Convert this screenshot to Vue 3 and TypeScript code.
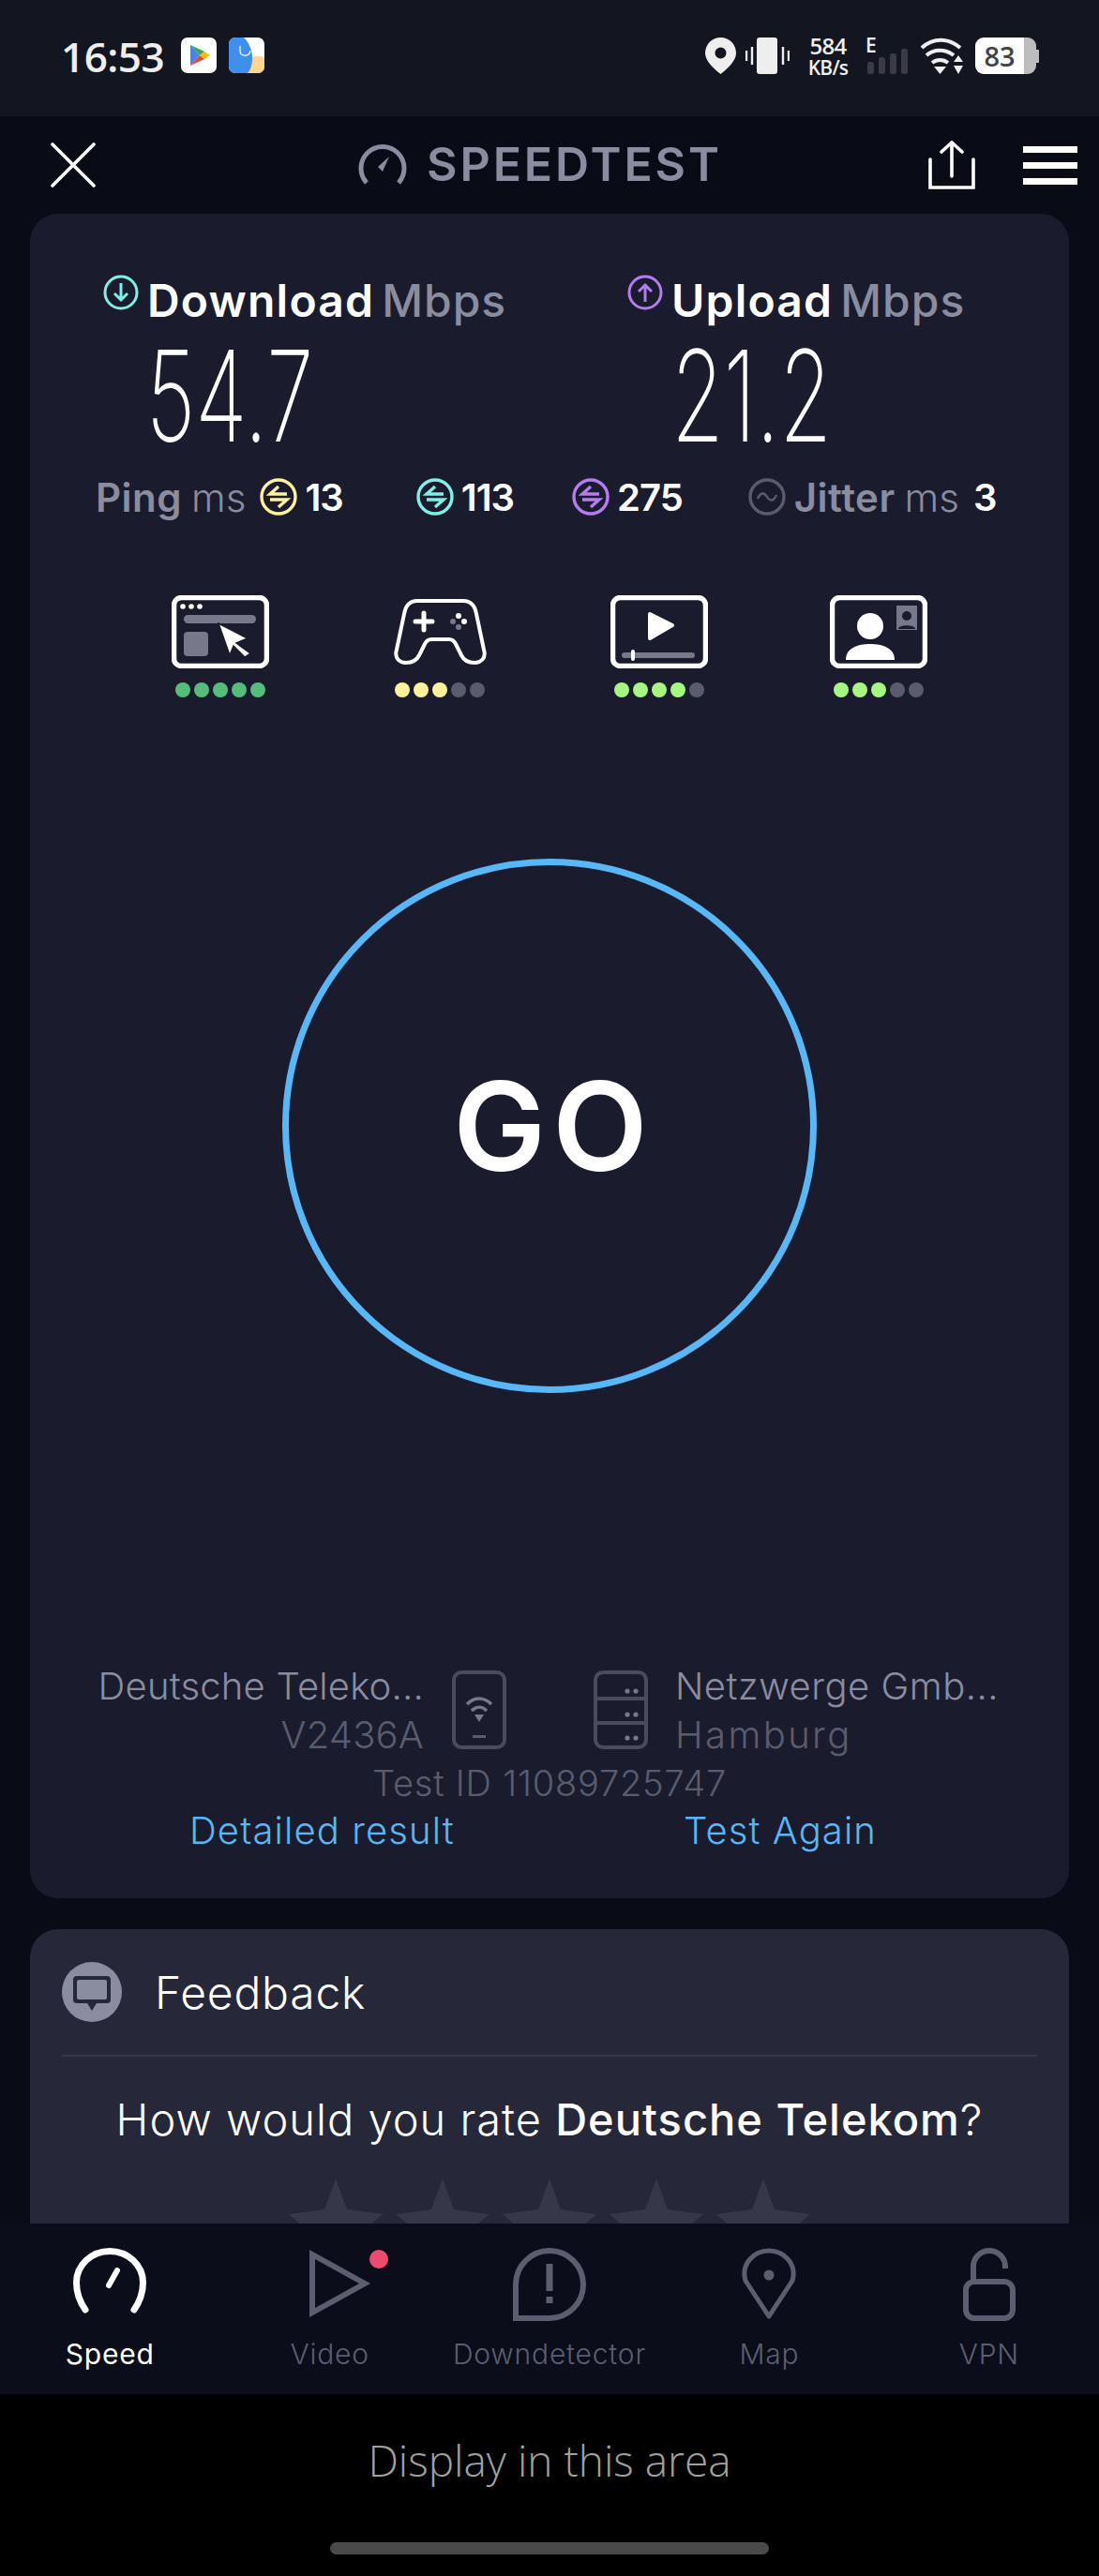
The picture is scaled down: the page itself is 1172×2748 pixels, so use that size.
<script setup lang="ts">
const quality = [
  { id: 'web', dots: ['#54bd7b', '#54bd7b', '#54bd7b', '#54bd7b', '#54bd7b'] },
  { id: 'game', dots: ['#fdf29a', '#fdf29a', '#fdf29a', '#5a5c6e', '#5a5c6e'] },
  { id: 'video', dots: ['#a5f77f', '#a5f77f', '#a5f77f', '#a5f77f', '#5a5c6e'] },
  { id: 'call', dots: ['#a5f77f', '#a5f77f', '#a5f77f', '#5a5c6e', '#5a5c6e'] },
]

const tabs = ['Speed', 'Video', 'Downdetector', 'Map', 'VPN']
</script>

<template>
  <div class="screen">
    <header class="status">
      <div class="status__left">
        <span class="clock">16:53</span>
        <svg class="app-icon" viewBox="0 0 38 38">
          <rect width="38" height="38" rx="7" fill="#fff" />
          <path d="M10 8 L20 19 L10 30 Z" fill="#4285f4" />
          <path d="M10 8 L25 15 L20 19 Z" fill="#34a853" />
          <path d="M10 30 L25 23 L20 19 Z" fill="#ea4335" />
          <path d="M25 15 L31 19 L25 23 L20 19 Z" fill="#fbbc04" />
        </svg>
        <svg class="app-icon" viewBox="0 0 38 38">
          <rect width="38" height="38" rx="7" fill="#fff" />
          <path d="M21 38 H31 A7 7 0 0 0 38 31 V22 C32 18 26 20 24 22 Z" fill="#fbd68c" />
          <path d="M7 0 H16 C22 6 25 14 25 22 C25 29 23 35 20 38 H7 A7 7 0 0 1 0 31 V7 A7 7 0 0 1 7 0 Z" fill="#3f8fee" />
          <path d="M12 9 V14 C12 21 22 21 23 14" fill="none" stroke="#e8f1ff" stroke-width="1.4" />
        </svg>
      </div>
      <div class="status__right">
        <svg class="st-pin" viewBox="0 0 33 39">
          <path fill-rule="evenodd" d="M16.5 0 A16.5 16.5 0 0 1 33 16.5 C33 25 24 33 16.5 39 C9 33 0 25 0 16.5 A16.5 16.5 0 0 1 16.5 0 Z M16.5 10.5 A6 6 0 1 0 16.51 22.5 A6 6 0 1 0 16.5 10.5 Z" fill="#eee" />
        </svg>
        <svg class="st-vibrate" viewBox="0 0 47 39">
          <rect x="12" y="0" width="22" height="39" rx="3" fill="#eee" />
          <path d="M1 14 V25 M7 10 V29 M40 10 V29 M46 14 V25" stroke="#eee" stroke-width="2.4" />
        </svg>
        <div class="net-speed"><span>584</span><span>KB/s</span></div>
        <div class="cell">
          <span class="cell__e">E</span>
          <svg class="cell__bars" viewBox="0 0 44 27">
            <rect x="0" y="14" width="7" height="13" rx="2.5" fill="#3a3b46" />
            <rect x="12" y="9" width="7" height="18" rx="2.5" fill="#3a3b46" />
            <rect x="24" y="5" width="7" height="22" rx="2.5" fill="#3a3b46" />
            <rect x="36" y="0" width="7" height="27" rx="2.5" fill="#3a3b46" />
          </svg>
        </div>
        <svg class="st-wifi" viewBox="0 0 49 39">
          <path d="M2 11 C14 0 30 0 43 11" fill="none" stroke="#eee" stroke-width="4" />
          <path d="M7 19 C15 12 27 12 36 19" fill="none" stroke="#eee" stroke-width="4" />
          <path d="M13 27 C18 23 25 23 30 27" fill="none" stroke="#eee" stroke-width="4" />
          <path d="M15 31 H28 L21.5 39 Z" fill="#eee" />
          <path d="M41 19 L46 26 H36 Z M36 30 H46 L41 39 Z" fill="#eee" />
        </svg>
        <div class="battery"><span class="battery__level">83</span><span class="battery__rest"></span><span class="battery__tip"></span></div>
      </div>
    </header>

    <nav class="appbar">
      <svg class="appbar__close" viewBox="0 0 48 48">
        <path d="M2 2 L46 46 M46 2 L2 46" stroke="#fff" stroke-width="3.6" stroke-linecap="round" />
      </svg>
      <div class="appbar__title">
        <svg class="appbar__gauge" viewBox="0 0 52 46">
          <path d="M9 43 A23 23 0 1 1 43 43" fill="none" stroke="#8a8ca0" stroke-width="5" />
          <path d="M21 26 L33 15 L26 31 Z" fill="#8a8ca0" />
        </svg>
        <span>SPEEDTEST</span>
      </div>
      <div class="appbar__actions">
        <svg class="appbar__share" viewBox="0 0 50 52">
          <path d="M2 20 V50 H48 V20 M25 38 V3 M14 12 L25 2 L36 12" fill="none" stroke="#fff" stroke-width="3.6" stroke-linecap="round" />
        </svg>
        <div class="burger"><span></span><span></span><span></span></div>
      </div>
    </nav>

    <main class="content">
      <section class="result">
        <div class="speeds">
          <div class="speed speed--down">
            <div class="speed__head">
              <svg class="speed__icon" viewBox="0 0 38 38">
                <circle cx="19" cy="19" r="17" fill="none" stroke="#7ff0e8" stroke-width="3" />
                <path d="M19 9 V27 M12 20 L19 27 L26 20" fill="none" stroke="#7ff0e8" stroke-width="3" />
              </svg>
              <span class="speed__label">Download</span>
              <span class="speed__unit">Mbps</span>
            </div>
            <div class="speed__value">54.7</div>
          </div>
          <div class="speed speed--up">
            <div class="speed__head">
              <svg class="speed__icon" viewBox="0 0 38 38">
                <circle cx="19" cy="19" r="17" fill="none" stroke="#b57bf0" stroke-width="3" />
                <path d="M19 29 V11 M12 18 L19 11 L26 18" fill="none" stroke="#b57bf0" stroke-width="3" />
              </svg>
              <span class="speed__label">Upload</span>
              <span class="speed__unit">Mbps</span>
            </div>
            <div class="speed__value">21.2</div>
          </div>
        </div>

        <div class="latency">
          <span class="latency__label">Ping</span>
          <span class="latency__unit">ms</span>
          <svg class="bolt bolt--ping" viewBox="0 0 40 40">
            <circle cx="20" cy="20" r="18" fill="none" stroke="currentColor" stroke-width="3.4" />
            <path d="M20 9 L11 17 H29 M20 31 L29 23 H11" fill="none" stroke="currentColor" stroke-width="3.4" />
          </svg>
          <b class="latency__num num-ping">13</b>
          <svg class="bolt bolt--down" viewBox="0 0 40 40">
            <circle cx="20" cy="20" r="18" fill="none" stroke="currentColor" stroke-width="3.4" />
            <path d="M20 9 L11 17 H29 M20 31 L29 23 H11" fill="none" stroke="currentColor" stroke-width="3.4" />
          </svg>
          <b class="latency__num num-down">113</b>
          <svg class="bolt bolt--up" viewBox="0 0 40 40">
            <circle cx="20" cy="20" r="18" fill="none" stroke="currentColor" stroke-width="3.4" />
            <path d="M20 9 L11 17 H29 M20 31 L29 23 H11" fill="none" stroke="currentColor" stroke-width="3.4" />
          </svg>
          <b class="latency__num num-up">275</b>
          <svg class="bolt bolt--jitter" viewBox="0 0 40 40">
            <circle cx="20" cy="20" r="18" fill="none" stroke="currentColor" stroke-width="3.4" />
            <path d="M10 22 C13 15 17 15 20 20 C23 25 27 25 30 18" fill="none" stroke="currentColor" stroke-width="2.4" />
          </svg>
          <span class="latency__label">Jitter</span>
          <span class="latency__unit">ms</span>
          <b class="latency__num num-jitter">3</b>
        </div>

        <div class="quality">
          <div v-for="q in quality" :key="q.id" class="quality__item">
            <div class="quality__icon">
              <svg v-if="q.id === 'web'" viewBox="0 0 104 78" width="104" height="78">
                <rect x="2.5" y="2.5" width="99" height="73" rx="8" fill="none" stroke="#fff" stroke-width="5.5" />
                <circle cx="12" cy="12" r="2.8" fill="#fff" />
                <circle cx="21" cy="12" r="2.8" fill="#fff" />
                <circle cx="30" cy="12" r="2.8" fill="#fff" />
                <rect x="13" y="21" width="77" height="9" rx="4.5" fill="#77788a" />
                <rect x="13" y="39" width="26" height="26" rx="4" fill="#77788a" />
                <path d="M50 30 L81 46 L69 51 L84 62 L78 66 L66 54 L62 64 Z" fill="#fff" stroke="#1a1c2e" stroke-width="1.5" />
              </svg>
              <svg v-else-if="q.id === 'game'" viewBox="0 0 99 70" width="99" height="70">
                <path d="M25 2 H74 C84 2 87 10 88 16 L96 54 C99 64 92 68 86 68 C80 68 75 66 72 60 L66 48 C64 44 62 43 59 43 H40 C37 43 35 44 33 48 L27 60 C24 66 19 68 13 68 C7 68 0 64 3 54 L11 16 C12 10 15 2 25 2 Z" fill="none" stroke="#fff" stroke-width="4" />
                <path d="M32 15 V33 M23 24 H41" stroke="#fff" stroke-width="5" stroke-linecap="round" />
                <circle cx="69" cy="18" r="3" fill="#fff" />
                <circle cx="75" cy="24" r="3" fill="#fff" />
                <circle cx="63" cy="24" r="3" fill="#77788a" />
                <circle cx="69" cy="30" r="3" fill="#77788a" />
              </svg>
              <svg v-else-if="q.id === 'video'" viewBox="0 0 104 78" width="104" height="78">
                <rect x="2.5" y="2.5" width="99" height="73" rx="8" fill="none" stroke="#fff" stroke-width="5.5" />
                <path d="M42 20 L66 32 L42 46 Z" fill="#fff" stroke="#fff" stroke-width="4" stroke-linejoin="round" />
                <rect x="12" y="61" width="78" height="6" rx="3" fill="#77788a" />
                <rect x="22" y="58" width="4" height="12" rx="2" fill="#fff" />
              </svg>
              <svg v-else viewBox="0 0 104 78" width="104" height="78">
                <rect x="2.5" y="2.5" width="99" height="73" rx="8" fill="none" stroke="#fff" stroke-width="5.5" />
                <ellipse cx="43" cy="33" rx="14" ry="14" fill="#fff" />
                <path d="M17 69 C17 56 30 52 43 52 C56 52 69 56 69 69 Z" fill="#fff" />
                <rect x="71" y="11" width="22" height="26" fill="#77788a" />
                <circle cx="82" cy="22" r="5" fill="#1a1c2e" />
                <path d="M73 36 C73 31 91 31 91 36 Z" fill="#1a1c2e" />
              </svg>
            </div>
            <div class="quality__dots">
              <i v-for="(c, i) in q.dots" :key="i" :style="{ background: c }"></i>
            </div>
          </div>
        </div>

        <div class="go">
          <div class="go__ring">GO</div>
        </div>

        <div class="info">
          <div class="info__side info__side--left">
            <div class="info__text">
              <div class="info__main">Deutsche Teleko...</div>
              <div class="info__sub">V2436A</div>
            </div>
            <svg class="info__icon" viewBox="0 0 58 84">
              <rect x="2" y="2" width="54" height="80" rx="8" fill="none" stroke="#4a4c5e" stroke-width="4" />
              <path d="M16 36 C24 28 34 28 42 36 M21 43 C26 38 32 38 37 43" fill="none" stroke="#77788a" stroke-width="3.5" />
              <path d="M24 47 H34 L29 55 Z" fill="#77788a" />
              <rect x="22" y="69" width="14" height="3" fill="#5a5c6e" />
            </svg>
          </div>
          <div class="info__side info__side--right">
            <svg class="info__icon" viewBox="0 0 58 84">
              <rect x="2" y="2" width="54" height="80" rx="8" fill="none" stroke="#4a4c5e" stroke-width="4" />
              <path d="M2 30 H56 M2 56 H56" stroke="#4a4c5e" stroke-width="4" />
              <g fill="#77788a">
                <circle cx="36" cy="22" r="2.6" /><circle cx="45" cy="22" r="2.6" />
                <circle cx="36" cy="47" r="2.6" /><circle cx="45" cy="47" r="2.6" />
                <circle cx="36" cy="72" r="2.6" /><circle cx="45" cy="72" r="2.6" />
              </g>
            </svg>
            <div class="info__text">
              <div class="info__main">Netzwerge Gmb...</div>
              <div class="info__sub info__sub--city">Hamburg</div>
            </div>
          </div>
        </div>
        <div class="test-id">Test ID 11089725747</div>
        <div class="links">
          <a class="links__detail">Detailed result</a>
          <a class="links__again">Test Again</a>
        </div>
      </section>

      <section class="feedback">
        <div class="feedback__head">
          <svg class="feedback__icon" viewBox="0 0 64 64">
            <circle cx="32" cy="32" r="32" fill="#8a8ca0" />
            <path d="M16 15 H48 A4 4 0 0 1 52 19 V40 A4 4 0 0 1 48 44 H37 L32 52 L27 44 H16 A4 4 0 0 1 12 40 V19 A4 4 0 0 1 16 15 Z" fill="#262839" />
            <rect x="16" y="19" width="32" height="21" rx="2" fill="#8a8ca0" />
          </svg>
          <span>Feedback</span>
        </div>
        <div class="feedback__question">How would you rate <b>Deutsche Telekom</b>?</div>
        <div class="feedback__stars">
          <svg v-for="n in 5" :key="n" viewBox="0 0 100 98" width="100" height="98">
            <path d="M50 0 L62 33 L100 38 L72 62 L82 98 L50 78 L18 98 L28 62 L0 38 L38 33 Z" fill="#363849" />
          </svg>
        </div>
      </section>
    </main>

    <footer class="tabs">
      <div v-for="(t, i) in tabs" :key="t" class="tab" :class="{ 'tab--on': i === 0 }">
        <div class="tab__icon">
          <svg v-if="t === 'Speed'" viewBox="0 0 78 70" width="78" height="70">
            <path d="M13 66 C6 56 3.5 47 3.5 37 A35.5 33.5 0 0 1 74.5 37 C74.5 47 72 56 65 66" fill="none" stroke="#fff" stroke-width="7" stroke-linecap="round" />
            <path d="M38 40 L47 24" stroke="#fff" stroke-width="6" stroke-linecap="round" />
          </svg>
          <svg v-else-if="t === 'Video'" class="tab__video" viewBox="0 0 90 76" width="90" height="76">
            <path d="M6 7 V69 L62 38 Z" fill="none" stroke="#5c5e70" stroke-width="6" />
            <circle cx="77" cy="12" r="10" fill="#ee4a6e" />
          </svg>
          <svg v-else-if="t === 'Downdetector'" viewBox="0 0 78 78" width="78" height="78">
            <path d="M3 75 V39 A36 36 0 0 1 75 39 A36 36 0 0 1 39 75 Z" fill="none" stroke="#5c5e70" stroke-width="6" />
            <path d="M39 17 V46 M39 52 V59" stroke="#5c5e70" stroke-width="7" />
          </svg>
          <svg v-else-if="t === 'Map'" viewBox="0 0 62 78" width="62" height="78">
            <path d="M31 73 L6 35 C1 18 14 3 31 3 C48 3 61 18 56 35 Z" fill="none" stroke="#5c5e70" stroke-width="5" stroke-linejoin="round" />
            <circle cx="31" cy="29" r="5.5" fill="#5c5e70" />
          </svg>
          <svg v-else viewBox="0 0 56 78" width="56" height="78">
            <rect x="3" y="36" width="50" height="39" rx="9" fill="none" stroke="#5c5e70" stroke-width="6" />
            <path d="M11 38 V20 A17 17 0 0 1 45 20 V22" fill="none" stroke="#5c5e70" stroke-width="6" />
          </svg>
        </div>
        <span class="tab__label">{{ t }}</span>
      </div>
    </footer>

    <aside class="ad">
      <div class="ad__text">Display in this area</div>
      <div class="ad__home"></div>
    </aside>
  </div>
</template>

<style scoped>
.screen {
  width: 1172px;
  height: 2748px;
  display: flex;
  flex-direction: column;
  overflow: hidden;
  background: #090b17;
  font-family: Inter, "Liberation Sans", sans-serif;
  color: #fff;
}

/* status bar */
.status {
  flex: 0 0 124px;
  box-sizing: border-box;
  background: #131520;
  display: flex;
  justify-content: space-between;
  padding: 40px 64px 0 65px;
  color: #eee;
}
.status__left {
  display: flex;
  align-items: flex-start;
}
.clock {
  font-family: "Open Sans", sans-serif;
  font-size: 44px;
  line-height: 40px;
  font-weight: 600;
  width: 128px;
  letter-spacing: -0.5px;
}
.app-icon {
  width: 38px;
  height: 38px;
  margin-right: 13px;
}
.status__right {
  display: flex;
  align-items: flex-start;
}
.st-pin { width: 33px; height: 39px; }
.st-vibrate { width: 47px; height: 39px; margin-left: 10px; }
.net-speed {
  margin-left: 18px;
  width: 46px;
  display: flex;
  flex-direction: column;
  align-items: center;
  font-family: "Open Sans", sans-serif;
  font-weight: 600;
  font-size: 24px;
  line-height: 25px;
  margin-top: -4px;
  letter-spacing: -0.8px;
}
.net-speed span:last-child {
  font-size: 21px;
  line-height: 22px;
}
.cell {
  width: 44px;
  margin-left: 19px;
  height: 39px;
  display: flex;
  flex-direction: column;
  align-items: flex-start;
}
.cell__e {
  font-family: "Open Sans", sans-serif;
  font-weight: 600;
  font-size: 21px;
  line-height: 16px;
  height: 12px;
  margin-left: -2px;
}
.cell__bars { width: 44px; height: 27px; }
.st-wifi { width: 49px; height: 39px; margin-left: 12px; }
.battery {
  margin-left: 10px;
  width: 68px;
  height: 39px;
  display: flex;
  border-radius: 9px;
  overflow: visible;
}
.battery__level {
  width: 53px;
  background: #fff;
  color: #444;
  border-radius: 9px 0 0 9px;
  font-family: "Open Sans", sans-serif;
  font-weight: 600;
  font-size: 29px;
  line-height: 39px;
  text-align: center;
}
.battery__rest {
  width: 13px;
  background: #bdbdbd;
  border-radius: 0 9px 9px 0;
}
.battery__tip {
  width: 3px;
  height: 14px;
  margin-top: 13px;
  background: #bdbdbd;
}

/* app bar */
.appbar {
  flex: 0 0 104px;
  display: grid;
  grid-template-columns: 1fr auto 1fr;
  align-items: start;
  padding: 26px 23px 0 54px;
  box-sizing: border-box;
}
.appbar__close { width: 48px; height: 48px; margin-top: 2px; }
.appbar__title {
  display: flex;
  align-items: center;
  gap: 21px;
  color: #8a8ca0;
  font-size: 50px;
  line-height: 50px;
  font-weight: 600;
  letter-spacing: 2.9px;
  margin-right: 51px;
}
.appbar__gauge { width: 52px; height: 46px; }
.appbar__actions {
  display: flex;
  justify-content: flex-end;
  gap: 51px;
}
.appbar__share { width: 50px; height: 52px; }
.burger {
  width: 58px;
  display: flex;
  flex-direction: column;
  gap: 10px;
  margin-top: 6px;
}
.burger span {
  height: 7px;
  background: #fff;
}

/* content */
.content {
  flex: 1;
  min-height: 0;
  overflow: hidden;
  padding: 0 32px;
  display: flex;
  flex-direction: column;
  gap: 33px;
}
.result {
  flex: 0 0 1797px;
  box-sizing: border-box;
  background: #1a1c2e;
  border-radius: 30px;
  display: flex;
  flex-direction: column;
}
.speeds {
  display: grid;
  grid-template-columns: 559px 1fr;
  padding: 62px 0 0 78px;
}
.speed__head {
  display: flex;
  align-items: flex-start;
  height: 66px;
}
.speed__icon {
  width: 38px;
  height: 38px;
  margin-top: 3px;
  margin-right: 9px;
}
.speed__label {
  font-size: 48px;
  line-height: 62px;
  font-weight: 600;
  letter-spacing: 1.2px;
  margin-right: 8px;
}
.speed__unit {
  font-size: 48px;
  line-height: 62px;
  font-weight: 500;
  letter-spacing: 1px;
  color: #8a8ca0;
}
.speed__value {
  font-size: 135px;
  line-height: 118px;
  font-weight: 150;
  transform: scaleX(0.67);
  transform-origin: left center;
  white-space: nowrap;
  height: 118px;
  margin-top: 7px;
  margin-left: 46px;
}
.speed--up .speed__value { margin-left: 47px; }

.latency {
  display: flex;
  align-items: center;
  height: 50px;
  margin-top: 24px;
  padding-left: 70px;
  font-size: 42px;
  white-space: nowrap;
}
.latency__label { font-weight: 600; color: #8a8ca0; letter-spacing: 0.5px; }
.latency__unit { font-weight: 300; color: #8a8ca0; margin-left: 10px; }
.latency__num { font-weight: 600; color: #fff; font-size: 40px; letter-spacing: -1px; }
.bolt { width: 40px; height: 40px; flex: none; }
.bolt--ping { color: #fdf29a; margin-left: 15px; }
.bolt--down { color: #7ff0e8; margin-left: 78px; }
.bolt--up { color: #b57bf0; margin-left: 62px; }
.bolt--jitter { color: #5a5c6e; margin-left: 70px; margin-right: 9px; }
.num-ping, .num-down, .num-up { margin-left: 8px; }
.num-jitter { margin-left: 15px; }

.quality {
  display: grid;
  grid-template-columns: repeat(4, 234px);
  padding: 0 0 0 86px;
  margin-top: 80px;
}
.quality__item {
  width: 234px;
  display: flex;
  flex-direction: column;
  align-items: center;
}
.quality__icon {
  height: 78px;
  display: flex;
  align-items: center;
}
.quality__icon svg { display: block; }
.quality__dots {
  display: flex;
  gap: 4px;
  margin-top: 15px;
}
.quality__dots i {
  display: block;
  width: 16px;
  height: 16px;
  border-radius: 50%;
}

.go {
  display: flex;
  justify-content: center;
  margin-top: 172px;
}
.go__ring {
  width: 570px;
  height: 570px;
  box-sizing: border-box;
  border: 7px solid #58b7f6;
  border-radius: 50%;
  display: flex;
  align-items: center;
  justify-content: center;
  font-size: 132px;
  letter-spacing: 7px;
  padding-left: 9px;
  font-weight: 600;
}

.info {
  display: grid;
  grid-template-columns: 1fr 1fr;
  margin-top: 296px;
}
.info__side {
  display: flex;
  align-items: flex-start;
}
.info__side--left {
  justify-content: flex-end;
  padding-right: 46px;
}
.info__side--right {
  padding-left: 47px;
}
.info__icon {
  width: 58px;
  height: 84px;
  flex: none;
}
.info__text {
  white-space: nowrap;
  font-size: 40px;
  letter-spacing: 0.5px;
  line-height: 52px;
  margin-top: -9px;
}
.info__side--left .info__text {
  text-align: right;
  margin-right: 30px;
  letter-spacing: 0.2px;
}
.info__side--right .info__text {
  margin-left: 29px;
}
.info__main { color: #8a8ca0; font-weight: 300; }
.info__sub { color: #5a5c6e; font-weight: 300; }
.info__sub--city { letter-spacing: 2.4px; }
.test-id {
  text-align: center;
  font-size: 38px;
  letter-spacing: 0.8px;
  line-height: 50px;
  font-weight: 300;
  color: #5a5c6e;
}
.links {
  display: grid;
  grid-template-columns: 697px 1fr;
  font-size: 40px;
  letter-spacing: 1.1px;
  line-height: 52px;
  font-weight: 300;
  color: #58b7f6;
}
.links__detail { padding-left: 170px; }

/* feedback */
.feedback {
  flex: none;
  background: #262839;
  border-radius: 30px;
  padding: 34px 34px 40px;
}
.feedback__head {
  display: flex;
  align-items: center;
  gap: 35px;
  height: 66px;
  padding-bottom: 34px;
  border-bottom: 2px solid #36384a;
  font-size: 48px;
  letter-spacing: 0.8px;
  font-weight: 300;
}
.feedback__icon { width: 64px; height: 64px; }
.feedback__question {
  text-align: center;
  font-size: 47px;
  letter-spacing: 1px;
  line-height: 54px;
  font-weight: 300;
  margin-top: 40px;
}
.feedback__question b { font-weight: 500; }
.feedback__stars {
  display: flex;
  justify-content: center;
  gap: 14px;
  margin-top: 36px;
}

/* tabs */
.tabs {
  flex: 0 0 182px;
  background: #0b0d1a;
  display: grid;
  grid-template-columns: repeat(5, 1fr);
}
.tab {
  display: flex;
  flex-direction: column;
  align-items: center;
  padding-top: 26px;
  color: #5c5e70;
}
.tab__icon {
  height: 78px;
  display: flex;
  align-items: flex-start;
}
.tab__icon svg { display: block; }
.tab__video { margin-left: 40px; }
.tab__label {
  font-size: 30px;
  letter-spacing: 0.8px;
  line-height: 36px;
  font-weight: 300;
  margin-top: 17px;
}
.tab--on { color: #fff; }
.tab--on .tab__label { font-weight: 400; }

/* ad area */
.ad {
  flex: 0 0 194px;
  background: #000;
  display: flex;
  flex-direction: column;
  align-items: center;
}
.ad__text {
  font-family: "Open Sans", sans-serif;
  font-size: 46px;
  line-height: 60px;
  font-weight: 300;
  color: #a0a0a0;
  margin-top: 40px;
}
.ad__home {
  width: 468px;
  height: 13px;
  border-radius: 7px;
  background: #4a4a4a;
  margin-top: 58px;
}
</style>

<style>
html, body { background: #000; }
</style>
